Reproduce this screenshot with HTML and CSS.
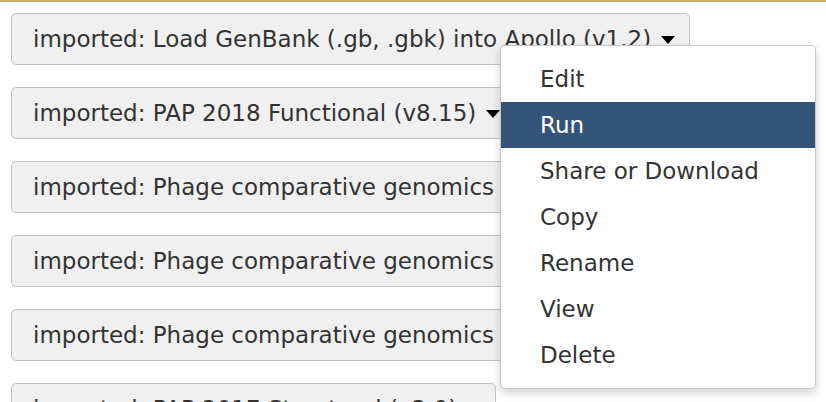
FILE: index.html
```html
<!DOCTYPE html>
<html>
<head>
<meta charset="utf-8">
<link rel="stylesheet" href="styles.css">
</head>
<body>
<div class="topbar"></div>
<div class="list">
  <div class="btn">imported: Load GenBank (.gb, .gbk) into Apollo (v1.2)<span class="caret"></span></div>
  <div class="btn">imported: PAP 2018 Functional (v8.15)<span class="caret"></span></div>
  <div class="btn">imported: Phage comparative genomics (v1.0)<span class="caret"></span></div>
  <div class="btn">imported: Phage comparative genomics (v1.1)<span class="caret"></span></div>
  <div class="btn">imported: Phage comparative genomics (v1.2)<span class="caret"></span></div>
  <div class="btn">imported: PAP 2017 Structural (v2.0)<span class="caret"></span></div>
</div>
<ul class="menu">
  <li>Edit</li>
  <li class="active">Run</li>
  <li>Share or Download</li>
  <li>Copy</li>
  <li>Rename</li>
  <li>View</li>
  <li>Delete</li>
</ul>
</body>
</html>
```
FILE: styles.css
```css
html, body {
  margin: 0;
  padding: 0;
  background: #fff;
  font-family: "DejaVu Sans", "Verdana", sans-serif;
  color: #333;
  overflow: hidden;
  height: 402px;
}
.topbar {
  height: 2px;
  background: #c9aa6b;
}
.list {
  display: flex;
  flex-direction: column;
  align-items: flex-start;
  gap: 22px;
  padding: 11px 0 0 11px;
}
.btn {
  box-sizing: border-box;
  height: 52px;
  display: flex;
  align-items: center;
  padding: 0 14px 0 21px;
  background: #f0f0f0;
  border: 1.5px solid #c2c2c2;
  border-radius: 5px;
  font-size: 23px;
  white-space: nowrap;
  color: #333;
}
.caret {
  display: inline-block;
  width: 0;
  height: 0;
  margin-left: 10px;
  border-left: 7px solid transparent;
  border-right: 7px solid transparent;
  border-top: 8px solid #000;
  margin-top: 2px;
}
.menu {
  position: absolute;
  left: 500px;
  top: 45px;
  width: 316px;
  box-sizing: border-box;
  margin: 0;
  padding: 10px 0;
  list-style: none;
  background: #fff;
  border: 1px solid #c8c8c8;
  border-radius: 5px;
  box-shadow: 0 4px 10px rgba(0,0,0,0.18);
}
.menu li {
  height: 46px;
  display: flex;
  align-items: center;
  padding-left: 39px;
  font-size: 23px;
  color: #333;
}
.menu li.active {
  background: #34547a;
  color: #fff;
}
```
